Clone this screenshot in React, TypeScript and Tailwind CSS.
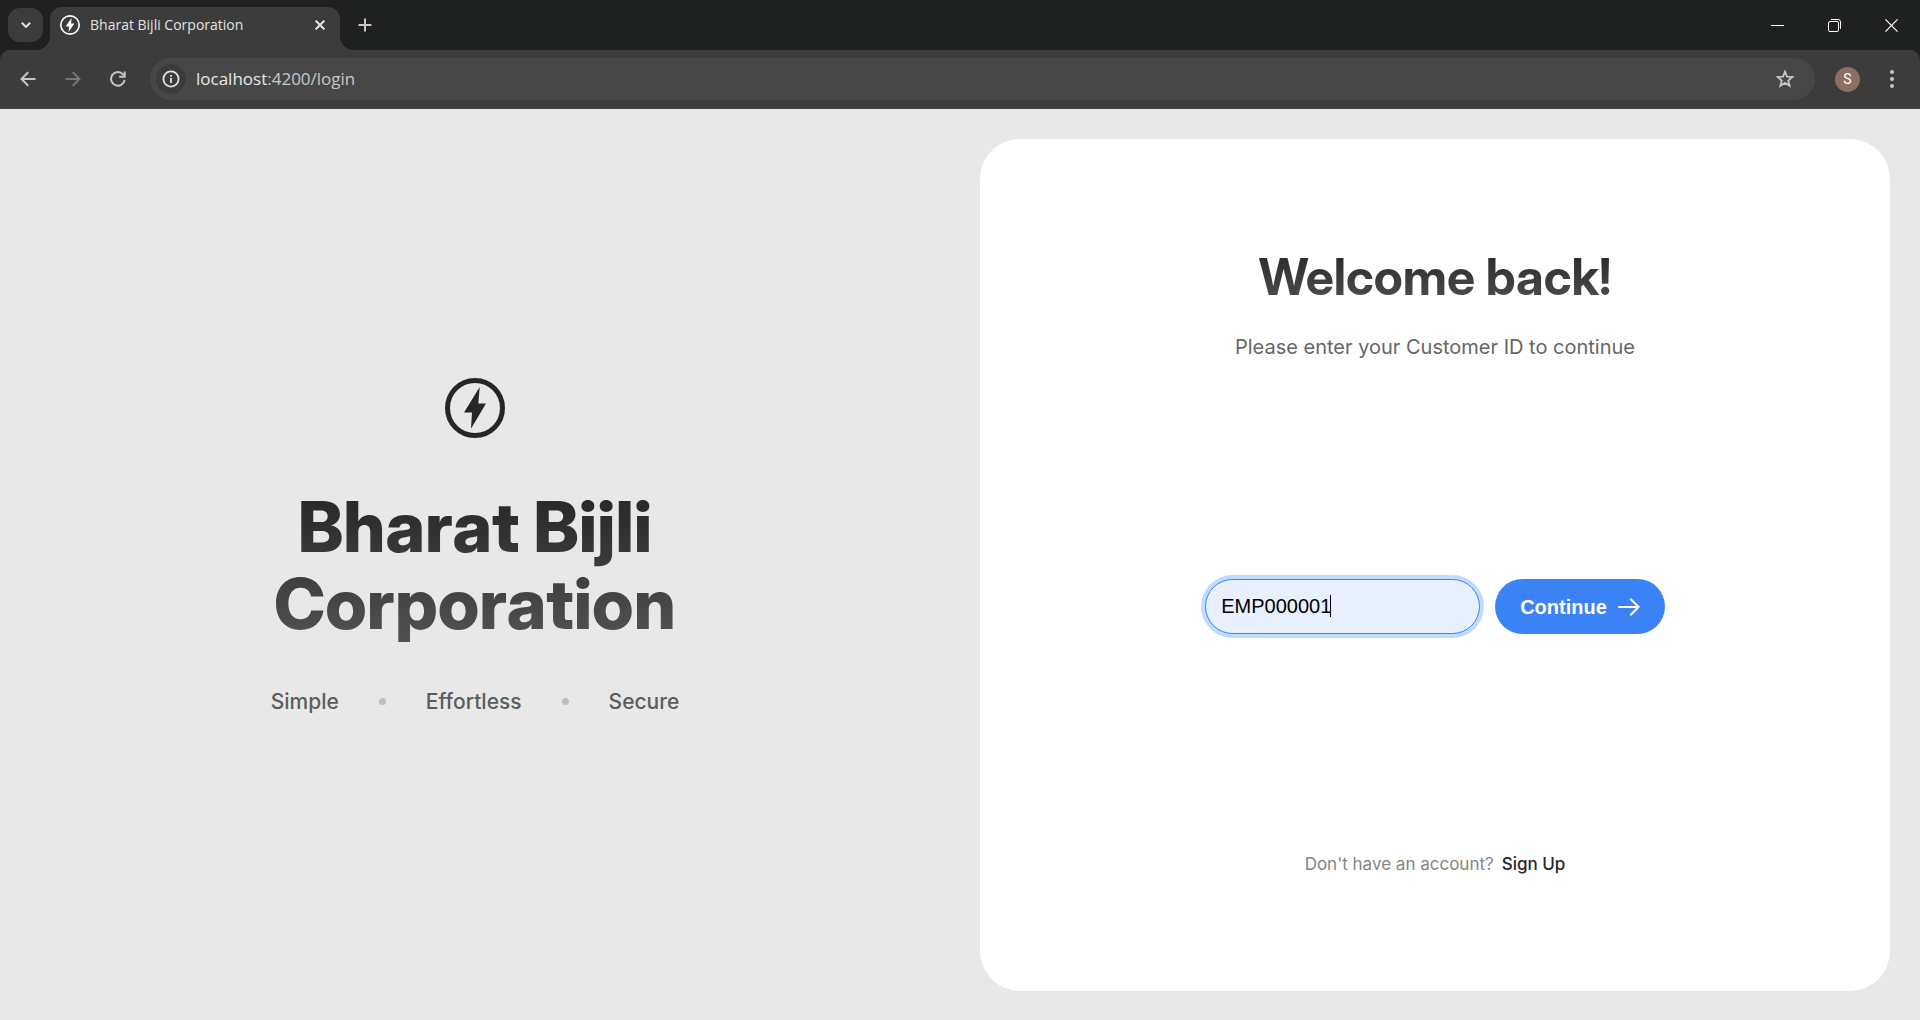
import { useState } from "react";

function BoltLogo({ className }: { className: string }) {
  return (
    <svg viewBox="0 0 60 60" className={className} fill="none" aria-hidden="true">
      <circle cx="30" cy="30" r="27.5" stroke="currentColor" strokeWidth="5" />
      <path d="M34.7 9 L19 34.6 H27 L26 50.8 L41 25.4 H33.3 Z" fill="currentColor" />
    </svg>
  );
}

function BoltFavicon() {
  return (
    <svg viewBox="0 0 60 60" className="size-5 text-white" fill="none" aria-hidden="true">
      <circle cx="30" cy="30" r="27.5" stroke="currentColor" strokeWidth="5" />
      <path d="M34.7 9 L17 34.6 H27 L26 50.8 L43 25.4 H33.3 Z" fill="currentColor" />
    </svg>
  );
}

function TabStrip() {
  return (
    <div className="flex h-[50px] items-center bg-[#1f2120] pl-2 text-[#e3e3e3]">
      <button
        aria-label="Search tabs"
        className="flex h-[34px] w-[35px] items-center justify-center rounded-xl bg-[#3c3c3c]"
      >
        <svg viewBox="0 0 10 6" className="w-2.5" fill="none" stroke="currentColor" strokeWidth="2">
          <path d="M0.8 0.8 5 4.9 9.2 0.8" />
        </svg>
      </button>
      <div className="relative ml-[7px] flex h-[43px] w-[290px] items-center self-end rounded-t-xl bg-[#3c3c3c] pr-3 pb-[7px] pl-2.5">
        <svg viewBox="0 0 14 14" className="absolute right-full bottom-0 w-3.5" fill="#3c3c3c" aria-hidden="true">
          <path d="M14 0A14 14 0 0 1 0 14H14Z" />
        </svg>
        <svg viewBox="0 0 14 14" className="absolute bottom-0 left-full w-3.5" fill="#3c3c3c" aria-hidden="true">
          <path d="M0 0A14 14 0 0 0 14 14H0Z" />
        </svg>
        <BoltFavicon />
        <span className="ml-2.5 flex-1 text-[14px] leading-5 whitespace-nowrap">Bharat Bijli Corporation</span>
        <button aria-label="Close tab" className="flex size-4 items-center justify-center">
          <svg viewBox="0 0 10 10" className="size-2.5" stroke="currentColor" strokeWidth="2">
            <path d="M0.6 0.6 9.4 9.4M9.4 0.6 0.6 9.4" />
          </svg>
        </button>
      </div>
      <button aria-label="New tab" className="ml-[17px] flex size-4 items-center justify-center text-[#c7c7c7]">
        <svg viewBox="0 0 14 14" className="size-3.5" stroke="currentColor" strokeWidth="2">
          <path d="M7 0.5V13.5M0.5 7H13.5" />
        </svg>
      </button>
      <div className="ml-auto flex h-full items-center text-white">
        <button aria-label="Minimize" className="flex h-full w-[57px] items-center justify-center">
          <svg viewBox="0 0 13 13" className="size-[13px]" stroke="currentColor">
            <path d="M0 6.5H13" />
          </svg>
        </button>
        <button aria-label="Restore" className="flex h-full w-[57px] items-center justify-center">
          <svg viewBox="0 0 13 13" className="size-[13px]" fill="none" stroke="currentColor">
            <rect x="0.5" y="2.5" width="10" height="10" rx="1.5" />
            <path d="M3 0.5H10A2.5 2.5 0 0 1 12.5 3V10" />
          </svg>
        </button>
        <button aria-label="Close" className="flex h-full w-[57px] items-center justify-center">
          <svg viewBox="0 0 13 13" className="size-[13px]" stroke="currentColor" strokeWidth="1.2">
            <path d="M0.4 0.4 12.6 12.6M12.6 0.4 0.4 12.6" />
          </svg>
        </button>
      </div>
    </div>
  );
}

function Toolbar() {
  return (
    <div className="bg-[#1f2120]">
      <div className="flex h-[59px] items-center rounded-t-[10px] border-b border-[#4a4a4a] bg-[#3c3c3c] pr-4 pl-[18px] text-[#c7c7c7]">
        <button aria-label="Back" className="flex size-5 items-center justify-center">
          <svg viewBox="0 0 16 16" className="size-4" fill="none" stroke="currentColor" strokeWidth="2">
            <path d="M15.5 8H2M8.2 1.3 1.5 8 8.2 14.7" />
          </svg>
        </button>
        <button aria-label="Forward" className="ml-[25px] flex size-5 items-center justify-center text-[#757575]">
          <svg viewBox="0 0 16 16" className="size-4" fill="none" stroke="currentColor" strokeWidth="2">
            <path d="M0.5 8H14M7.8 1.3 14.5 8 7.8 14.7" />
          </svg>
        </button>
        <button aria-label="Reload" className="ml-[25px] flex size-5 items-center justify-center">
          <svg viewBox="0 0 16 16" className="size-4" fill="none" stroke="currentColor" strokeWidth="2">
            <path d="M14.6 9A6.8 6.8 0 1 1 13 3.4L14.6 5" />
            <path d="M14.7 0.5V5.8H9.2" />
          </svg>
        </button>
        <div className="ml-[22px] flex h-[42px] flex-1 items-center rounded-full bg-[#474747] pr-5 pl-1.5">
          <button
            aria-label="Site information"
            className="flex size-[30px] items-center justify-center rounded-full bg-[#3c3c3c] text-[#e3e3e3]"
          >
            <svg viewBox="0 0 18 18" className="size-[18px]" fill="none" stroke="currentColor" strokeWidth="1.8">
              <circle cx="9" cy="9" r="7.6" />
              <path d="M9 8V13M9 4.9V6.7" />
            </svg>
          </button>
          <div className="ml-2.5 flex-1 text-[17px] leading-6 text-[#c7c7c7]">
            <span className="text-[#e8e8e8]">localhost</span>:4200/login
          </div>
          <button aria-label="Bookmark this page" className="flex size-5 items-center justify-center">
            <svg viewBox="0 0 20 20" className="size-5" fill="none" stroke="currentColor" strokeWidth="1.8">
              <path d="M10 2.6 12 7.6 17.4 8 13.3 11.5 14.6 16.8 10 13.9 5.4 16.8 6.7 11.5 2.6 8 8 7.6Z" />
            </svg>
          </button>
        </div>
        <button
          aria-label="Profile"
          className="ml-5 flex size-[25px] items-center justify-center rounded-full bg-[#8d6e63] font-[Roboto] text-[14px] text-white"
        >
          S
        </button>
        <button aria-label="Menu" className="ml-5 flex h-5 w-6 items-center justify-center">
          <svg viewBox="0 0 4 18" className="h-[18px] w-1" fill="currentColor">
            <circle cx="2" cy="2" r="2" />
            <circle cx="2" cy="9" r="2" />
            <circle cx="2" cy="16" r="2" />
          </svg>
        </button>
      </div>
    </div>
  );
}

function Dot() {
  return <span className="size-[7px] rounded-full bg-[#bfbfbf]" />;
}

function Brand() {
  return (
    <section className="flex flex-col items-center justify-center pr-2.5 pb-[38px]">
      <BoltLogo className="size-[60px] text-[#262626]" />
      <h1 className="mt-[50px] bg-linear-to-b from-[#262626] to-[#525252] bg-clip-text text-center font-['Inter_Display',Inter,sans-serif] text-[70px] leading-[77px] font-extrabold text-transparent">
        Bharat Bijli
        <br />
        Corporation
      </h1>
      <div className="mt-12 flex items-center gap-10 text-[21px] leading-6 font-medium text-[#5c5c5c]">
        <span>Simple</span>
        <Dot />
        <span>Effortless</span>
        <Dot />
        <span>Secure</span>
      </div>
    </section>
  );
}

function LoginCard() {
  const [customerId, setCustomerId] = useState("EMP000001");
  return (
    <section className="flex pt-[30px] pr-[30px] pb-[29px] pl-5">
      <div className="flex flex-1 flex-col items-center justify-between rounded-[40px] bg-white pt-[108px] pb-[117px]">
        <header className="text-center">
          <h2 className="bg-linear-to-b from-[#262626] to-[#525252] bg-clip-text font-['Inter_Display',Inter,sans-serif] text-[50px] leading-[60px] font-bold text-transparent">
            Welcome back!
          </h2>
          <p className="mt-7 text-[20px] leading-6 text-[#666666]">Please enter your Customer ID to continue</p>
        </header>
        <form
          className="flex gap-[15px] font-['Liberation_Sans',Arial,sans-serif] text-[20px]"
          onSubmit={(e) => e.preventDefault()}
        >
          <div className="relative">
            <input
              type="text"
              aria-label="Customer ID"
              value={customerId}
              onChange={(e) => setCustomerId(e.target.value)}
              className="h-[55px] w-[275px] rounded-full border border-[#3b82f6] bg-[#e8f0fe] px-[15px] text-black ring-4 ring-[#bfdbfe] outline-none"
            />
            <span className="pointer-events-none absolute top-4 left-[125px] h-[22px] w-px bg-black" />
          </div>
          <button
            type="submit"
            className="flex h-[55px] items-center gap-[11px] rounded-full bg-[#3b82f6] px-[25px] font-bold text-white"
          >
            Continue
            <svg viewBox="0 0 22 18" className="w-[22px]" fill="none" stroke="currentColor" strokeWidth="2" strokeLinecap="round" strokeLinejoin="round">
              <path d="M1 9H20.5M12.8 1.2 20.6 9 12.8 16.8" />
            </svg>
          </button>
        </form>
        <p className="flex gap-2 text-[17px] leading-5 text-[#858585]">
          Don't have an account?
          <a href="#signup" className="font-medium text-[#262626]">
            Sign Up
          </a>
        </p>
      </div>
    </section>
  );
}

export default function App() {
  return (
    <div className="flex min-h-screen flex-col bg-[#e8e8e8]">
      <div className="font-['Open_Sans','Noto_Sans',sans-serif]">
        <TabStrip />
        <Toolbar />
      </div>
      <main className="grid flex-1 grid-cols-2 font-[Inter,sans-serif]">
        <Brand />
        <LoginCard />
      </main>
    </div>
  );
}
